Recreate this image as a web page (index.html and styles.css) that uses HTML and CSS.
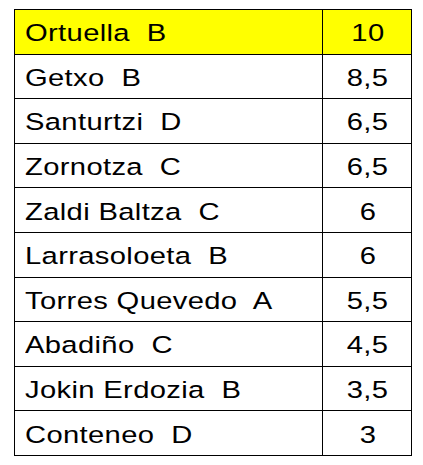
FILE: index.html
```html
<!DOCTYPE html>
<html lang="es">
<head>
<meta charset="utf-8">
<link rel="stylesheet" href="styles.css">
</head>
<body>
<table class="standings">
  <tbody>
    <tr class="leader"><td class="team"><span class="txt">Ortuella&nbsp; B</span></td><td class="pts"><span class="txt">10</span></td></tr>
    <tr><td class="team"><span class="txt">Getxo&nbsp; B</span></td><td class="pts"><span class="txt">8,5</span></td></tr>
    <tr><td class="team"><span class="txt">Santurtzi&nbsp; D</span></td><td class="pts"><span class="txt">6,5</span></td></tr>
    <tr><td class="team"><span class="txt">Zornotza&nbsp; C</span></td><td class="pts"><span class="txt">6,5</span></td></tr>
    <tr><td class="team"><span class="txt">Zaldi Baltza&nbsp; C</span></td><td class="pts"><span class="txt">6</span></td></tr>
    <tr><td class="team"><span class="txt">Larrasoloeta&nbsp; B</span></td><td class="pts"><span class="txt">6</span></td></tr>
    <tr><td class="team"><span class="txt">Torres Quevedo&nbsp; A</span></td><td class="pts"><span class="txt">5,5</span></td></tr>
    <tr><td class="team"><span class="txt">Abadiño&nbsp; C</span></td><td class="pts"><span class="txt">4,5</span></td></tr>
    <tr><td class="team"><span class="txt">Jokin Erdozia&nbsp; B</span></td><td class="pts"><span class="txt">3,5</span></td></tr>
    <tr><td class="team"><span class="txt">Conteneo&nbsp; D</span></td><td class="pts"><span class="txt">3</span></td></tr>
  </tbody>
</table>
</body>
</html>
```
FILE: styles.css
```css
html, body {
  margin: 0;
  padding: 0;
  background: #ffffff;
}

body {
  padding: 9px 0 0 14px;
  font-family: "Liberation Sans", Arial, sans-serif;
  color: #000000;
}

.standings {
  border-collapse: collapse;
  table-layout: fixed;
  width: 398px;
}

.standings td {
  border: 1px solid #000000;
  height: 44.6px;
  padding: 3px 0 0 0;
  box-sizing: border-box;
  font-size: 24.5px;
  line-height: 28px;
  white-space: nowrap;
}

.standings .txt {
  display: inline-block;
  transform: scaleX(1.19);
  letter-spacing: 0.3px;
}

.standings .team {
  width: 308px;
  padding-left: 10px;
}

.standings .team .txt {
  transform-origin: left center;
}

.standings .pts {
  text-align: center;
  padding-left: 1px;
}

.standings .pts .txt {
  transform-origin: center center;
}

.standings .leader td {
  background: #ffff00;
}
```
